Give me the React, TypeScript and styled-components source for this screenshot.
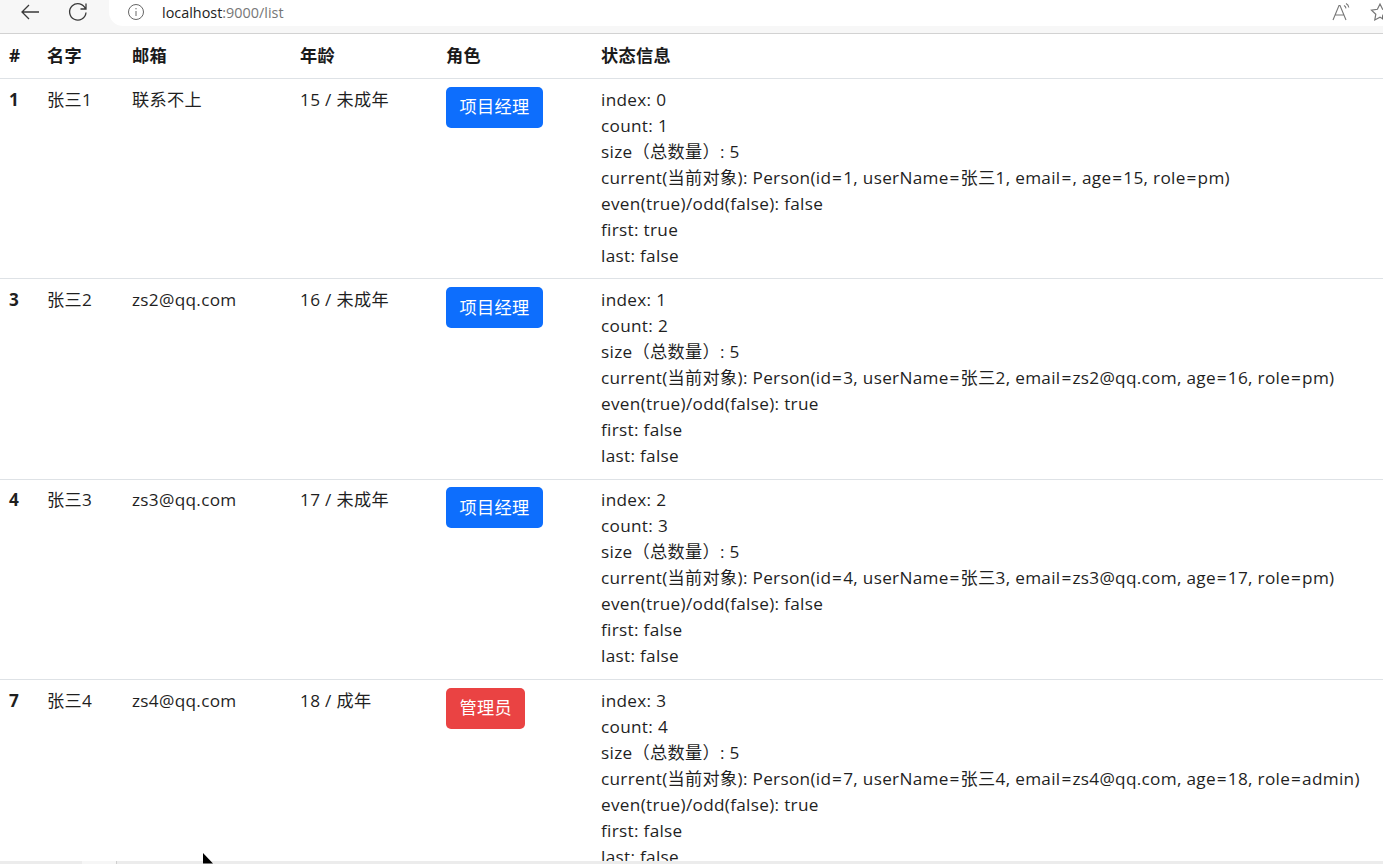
import React from "react";
import styled, { createGlobalStyle } from "styled-components";

const Global = createGlobalStyle`
  html, body { margin: 0; padding: 0; height: 864px; overflow: hidden; background: #fff; }
  #root { height: 864px; }
`;
const Page = styled.div`
  position: relative;
  height: 864px;
  display: flex;
  flex-direction: column;
  overflow: hidden;
  font-family: "Open Sans", "Noto Sans CJK SC", sans-serif;
  color: #212529;
`;
const Chrome = styled.div`
  flex: none;
  height: 33px;
  display: flex;
  align-items: center;
  background: #f7f7f7;
  border-bottom: 1px solid #d2d2d2;
`;
const NavButton = styled.span`
  flex: none;
  display: flex;
  width: 24px;
  height: 24px;
  margin-left: ${(p: { $left: number }) => p.$left}px;
  margin-top: -9px;
  color: #3a3a3a;
`;
const Address = styled.div`
  flex: 1;
  height: 28px;
  margin: -9px 0 0 19px;
  display: flex;
  align-items: center;
  padding-left: 18px;
  background: #fff;
  border-radius: 0 0 0 14px;
  font-size: 14.4px;
  color: #222;
`;
const Host = styled.span`
  margin-left: 17px;
`;
const Muted = styled.span`
  color: #777;
`;
const Tools = styled.div`
  position: absolute;
  top: 2px;
  right: -9px;
  display: flex;
  gap: 19px;
  color: #777;
`;
const Table = styled.table`
  width: 1383px;
  table-layout: fixed;
  border-collapse: collapse;
  font-size: 17.2px;
  letter-spacing: 0.3px;
  line-height: 26px;
  flex: none;
`;
const Col = styled.col<{ $w: number }>`
  width: ${(p) => p.$w}px;
`;
const Head = styled.th`
  padding: 9px 0 9px 9px;
  text-align: left;
  font-weight: 700;
  color: #1a1a1a;
  border-bottom: 1px solid #dee2e6;
`;
const Row = styled.tr`
  border-bottom: 1px solid #dee2e6;
`;
const Cell = styled.td`
  padding: 7.7px 0 9.7px 9px;
  vertical-align: top;
  white-space: nowrap;
  color: #1f1f1f;
`;
const Num = styled(Cell)`
  font-weight: 700;
`;
const Badge = styled.button<{ $admin?: boolean }>`
  display: inline-block;
  height: 41px;
  padding: 0 13.5px;
  border: none;
  border-radius: 5px;
  background: ${(p) => (p.$admin ? "#ea4343" : "#0d6efd")};
  color: #fff;
  font: inherit;
  letter-spacing: inherit;
`;
const Line = styled.div``;
const Eq = styled.span`
  margin: 0 0.9px;
`;
const ScrollBar = styled.div`
  position: absolute;
  left: 0;
  right: 0;
  bottom: 0;
  height: 3px;
  background: #ececec;
`;
const ScrollThumb = styled.div`
  width: 34px;
  height: 3px;
  margin-left: 82px;
  background: #f6f6f6;
  border-right: 1px solid #cfcfcf;
`;
const Cursor = styled.svg`
  position: absolute;
  left: 203px;
  top: 853px;
`;

const people = [
  { no: 1, id: 1, name: "张三1", email: "", show: "联系不上", age: 15, adult: "未成年", role: "pm", index: 0, even: false, first: true },
  { no: 3, id: 3, name: "张三2", email: "zs2@qq.com", show: "zs2@qq.com", age: 16, adult: "未成年", role: "pm", index: 1, even: true, first: false },
  { no: 4, id: 4, name: "张三3", email: "zs3@qq.com", show: "zs3@qq.com", age: 17, adult: "未成年", role: "pm", index: 2, even: false, first: false },
  { no: 7, id: 7, name: "张三4", email: "zs4@qq.com", show: "zs4@qq.com", age: 18, adult: "成年", role: "admin", index: 3, even: true, first: false },
];

export default function App() {
  return (
    <Page>
      <Global />
      <Chrome>
        <NavButton $left={18}>
          <svg width="24" height="24" viewBox="0 0 24 24" fill="none" stroke="currentColor" strokeWidth="1.3">
            <path d="M21 12H4M11 5l-7 7 7 7" />
          </svg>
        </NavButton>
        <NavButton $left={24}>
          <svg width="24" height="24" viewBox="0 0 24 24" fill="none" stroke="currentColor" strokeWidth="1.3">
            <path d="M19.500 9A8.200 8.200 0 1 0 20 12.500M20 3.500V9h-5.500" />
          </svg>
        </NavButton>
        <Address>
          <svg width="18" height="18" viewBox="0 0 18 18" fill="none" stroke="#666" strokeWidth="1">
            <circle cx="9" cy="9" r="7.5" />
            <path d="M9 8v5M9 5v1.3" />
          </svg>
          <Host>
            localhost<Muted>:9000/list</Muted>
          </Host>
        </Address>
      </Chrome>
      <Tools>
        <svg width="20" height="20" viewBox="0 0 20 20" fill="none" stroke="currentColor" strokeWidth="1.1">
          <path d="M2 18 8 3.500h1L15 18M4.200 13h9M13 3.500c1.200.6 1.800 1.400 2 2.800M15 1.500c1.700.8 2.600 2.200 2.800 4" />
        </svg>
        <svg width="22" height="20" viewBox="0 0 22 20" fill="none" stroke="currentColor" strokeWidth="1.2">
          <path d="M10 2l2.600 5.300 5.900.8-4.300 4.100 1 5.800L10 15.300 4.800 18l1-5.800L1.500 8.100l5.900-.8z" />
          <circle cx="16" cy="15" r="4" fill="#666" stroke="none" />
        </svg>
      </Tools>
      <Table>
        <colgroup>
          <Col $w={38} />
          <Col $w={85} />
          <Col $w={168} />
          <Col $w={146} />
          <Col $w={155} />
          <Col $w={791} />
        </colgroup>
        <thead>
          <tr>
            <Head>#</Head>
            <Head>名字</Head>
            <Head>邮箱</Head>
            <Head>年龄</Head>
            <Head>角色</Head>
            <Head>状态信息</Head>
          </tr>
        </thead>
        <tbody>
          {people.map((p) => (
            <Row key={p.id}>
              <Num>{p.no}</Num>
              <Cell>{p.name}</Cell>
              <Cell>{p.show}</Cell>
              <Cell>
                {p.age} / {p.adult}
              </Cell>
              <Cell>
                <Badge $admin={p.role === "admin"}>{p.role === "admin" ? "管理员" : "项目经理"}</Badge>
              </Cell>
              <Cell>
                <Line>index: {p.index}</Line>
                <Line>count: {p.index + 1}</Line>
                <Line>size（总数量）: 5</Line>
                <Line>
                  current(当前对象): Person(id<Eq>=</Eq>{p.id}, userName<Eq>=</Eq>{p.name}, email<Eq>=</Eq>{p.email}, age<Eq>=</Eq>{p.age}, role<Eq>=</Eq>{p.role})
                </Line>
                <Line>even(true)/odd(false): {String(p.even)}</Line>
                <Line>first: {String(p.first)}</Line>
                <Line>last: false</Line>
              </Cell>
            </Row>
          ))}
        </tbody>
      </Table>
      <ScrollBar>
        <ScrollThumb />
      </ScrollBar>
      <Cursor width="14" height="12" viewBox="0 0 14 12">
        <path d="M0 0 10 10.500H0z" fill="#000" />
      </Cursor>
    </Page>
  );
}
